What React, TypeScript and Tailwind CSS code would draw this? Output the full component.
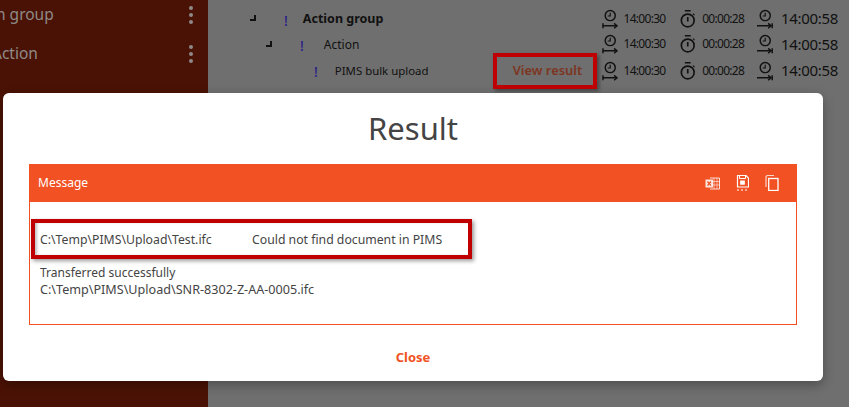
import React from 'react';

const font = { fontFamily: '"Noto Sans", "Open Sans", sans-serif' };

const StartIcon = () => (
    <svg width="17" height="20" viewBox="0 0 17 20" fill="none" stroke="#111" strokeWidth="1.5">
        <circle cx="8.5" cy="6.5" r="5.2" />
        <path d="M8.5 3.5v3.4l-2.6 0" strokeWidth="1.2" />
        <path d="M1 14.5v5M1 17h14" />
        <path d="M12.5 14.5L15.5 17l-3 2.5" />
    </svg>
);

const EndIcon = () => (
    <svg width="17" height="20" viewBox="0 0 17 20" fill="none" stroke="#111" strokeWidth="1.5">
        <circle cx="8.5" cy="6.5" r="5.2" />
        <path d="M8.5 3.5v3.4l-2.6 0" strokeWidth="1.2" />
        <path d="M0 17h14.5M15.7 14.5v5" />
        <path d="M11.5 14.5L14.5 17l-3 2.5" />
    </svg>
);

const StopwatchIcon = () => (
    <svg width="16" height="20" viewBox="0 0 16 20" fill="none" stroke="#111" strokeWidth="1.7">
        <circle cx="8" cy="11.5" r="6.6" />
        <path d="M5 1.5h6M8 8v4.5" />
        <path d="M13.5 4.5l1.5 1.5" strokeWidth="1.2" />
    </svg>
);

const ExcelIcon = () => (
    <svg width="15" height="13" viewBox="0 0 15 13" fill="none">
        <path d="M5 1h9.5v11H5" stroke="#fff" strokeOpacity="0.8" />
        <path d="M9 1v11M12 1v11M5 4.5h9.5M5 8h9.5" stroke="#fff" strokeOpacity="0.55" />
        <rect x="0.5" y="2.5" width="7.5" height="8" fill="#fff" fillOpacity="0.85" />
        <path d="M2.5 4.5l3.5 4.2M6 4.5L2.5 8.7" stroke="#f15123" strokeWidth="1.3" />
    </svg>
);

const SaveIcon = () => (
    <svg width="13" height="16" viewBox="0 0 13 16" fill="none" stroke="#fff">
        <path d="M1.5 0.5h8.5l2.5 2.5v9h-11z" strokeWidth="1.2" />
        <path d="M3.5 1v2.5h6V1" />
        <rect x="4.7" y="6" width="3.6" height="3.2" fill="#fff" />
        <path d="M1 15h11" strokeDasharray="2 2" strokeWidth="1.2" />
    </svg>
);

const CopyIcon = () => (
    <svg width="14" height="16" viewBox="0 0 14 16" fill="none" stroke="#fff">
        <path d="M1 12V2.5Q1 0.5 3 0.5h6" strokeOpacity="0.75" strokeWidth="1.2" />
        <rect x="3.7" y="3.5" width="9.3" height="12" strokeWidth="1.3" />
    </svg>
);

const Corner = () => (
    <span className="block h-[6px] w-[6px] border-r-2 border-b-2 border-[#111]" />
);

const Bang = () => <span className="w-[5px] text-center text-[14px] leading-none font-medium text-[#28208a]">!</span>;

const Times = ({ raised }: { raised?: boolean }) => (
    <div className={`ml-auto flex w-[236px] items-center text-[#111] ${raised ? 'mb-[2px]' : ''}`}>
        <StartIcon />
        <span className="ml-[5px] w-[58px] text-[12px] tracking-[-0.7px]">14:00:30</span>
        <StopwatchIcon />
        <span className="ml-[7px] w-[57px] text-[12px] tracking-[-0.7px]">00:00:28</span>
        <EndIcon />
        <span className="ml-[7px] text-[15px] tracking-[-0.3px]">14:00:58</span>
    </div>
);

const SideItem = ({ label, height }: { label: string; height: string }) => (
    <div className={`flex items-center justify-between pr-[15px] text-[15.5px] text-[#8e8a88] ${height}`}>
        <span>{label}</span>
        <span className="flex flex-col gap-[3px]">
            <i className="block h-[4px] w-[4px] rounded-full bg-[#8e8a88]" />
            <i className="block h-[4px] w-[4px] rounded-full bg-[#8e8a88]" />
            <i className="block h-[4px] w-[4px] rounded-full bg-[#8e8a88]" />
        </span>
    </div>
);

export default function App() {
    return (
        <div className="relative flex h-[407px] w-[849px] overflow-hidden bg-[#6f6f6f]" style={font}>
            <aside className="h-full w-[208px] overflow-hidden bg-[#4a1204]">
                <SideItem label="n group" height="h-[30px] -ml-[4px]" />
                <div className="h-[9px]" />
                <SideItem label="Action" height="h-[30px] -ml-[8px]" />
            </aside>

            <main className="flex-1 pr-[11px] pt-[7px]">
                <div className="flex h-[25px] items-center">
                    <div className="ml-[42px] mb-[3px]"><Corner /></div>
                    <div className="ml-[28px]"><Bang /></div>
                    <span className="ml-[15px] text-[12.5px] font-bold text-[#111]">Action group</span>
                    <Times raised />
                </div>
                <div className="flex h-[26px] items-center">
                    <div className="ml-[58px] mb-[3px]"><Corner /></div>
                    <div className="ml-[28px]"><Bang /></div>
                    <span className="ml-[20px] text-[12px] text-[#111]">Action</span>
                    <Times raised />
                </div>
                <div className="flex h-[25px] items-center">
                    <div className="ml-[106px]"><Bang /></div>
                    <span className="ml-[17px] text-[11.4px] text-[#111]">PIMS bulk upload</span>
                    <div className="ml-[65px] -my-[6px] flex h-[36px] w-[104px] items-center justify-center border-4 border-[#c00000] pl-[4px] text-[12.9px] font-semibold text-[#7d3522] shadow-[2px_2px_4px_rgba(0,0,0,0.4)]">
                        View result
                    </div>
                    <Times />
                </div>
            </main>

            <div className="absolute top-[93px] left-[3px] flex h-[288px] w-[820px] flex-col rounded-[6px] bg-white shadow-[0_4px_12px_rgba(0,0,0,0.3)]">
                <h1 className="mt-[12px] text-center text-[31px] leading-[46px] text-[#444]">Result</h1>
                <section className="mx-[26px] mt-[13px] border border-[#f15123]">
                    <header className="-mx-px -mt-px flex h-[38px] items-center bg-[#f15123] pr-[18px] pl-[9px] text-white">
                        <span className="flex-1 text-[12px]">Message</span>
                        <div className="flex items-center gap-[16px]">
                            <ExcelIcon />
                            <SaveIcon />
                            <CopyIcon />
                        </div>
                    </header>
                    <div className="h-[122px] pt-[17px] text-[12px] leading-[17px] text-[#444]">
                        <div className="ml-[1px] flex h-[40px] w-[441px] items-center border-4 border-[#c00000] pl-[5px] text-[12.25px] shadow-[2px_2px_4px_rgba(0,0,0,0.4),inset_3px_0_3px_-1px_rgba(0,0,0,0.25)]">
                            <span className="w-[212px]">C:\Temp\PIMS\Upload\Test.ifc</span>
                            <span>Could not find document in PIMS</span>
                        </div>
                        <p className="mt-[5px] pl-[10px]">Transferred successfully</p>
                        <p className="pl-[10px] text-[12.6px]">C:\Temp\PIMS\Upload\SNR-8302-Z-AA-0005.ifc</p>
                    </div>
                </section>
                <div className="mt-[23px] text-center text-[13px] font-bold text-[#f15123]">Close</div>
            </div>
        </div>
    );
}
